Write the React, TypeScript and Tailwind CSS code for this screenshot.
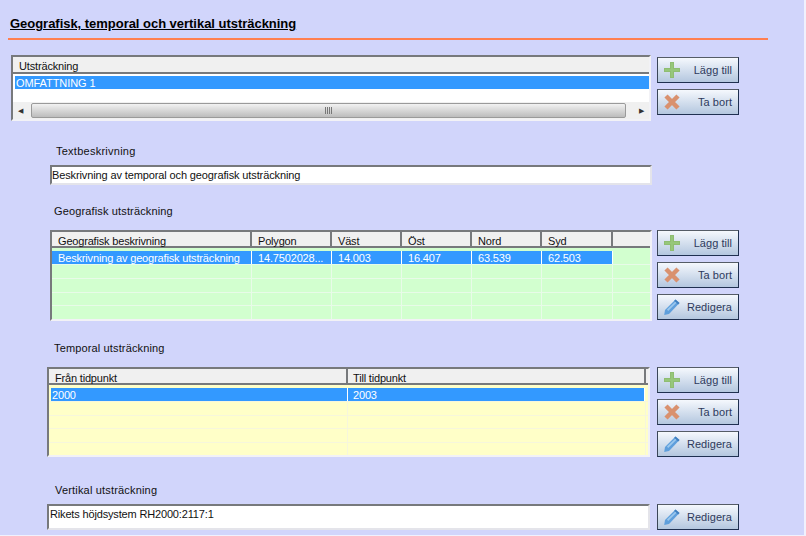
import React from 'react';

type Col = {
  title: string;
  value: string;
  width: string;
  cellWidth: string;
  cellPad: string;
  headPad: string;
};

const GEO_COLS: Col[] = [
  { title: 'Geografisk beskrivning', value: 'Beskrivning av geografisk utsträckning', width: 'w-[200px]', cellWidth: 'w-[200px]', cellPad: 'pl-[6px]', headPad: 'pl-[6px]' },
  { title: 'Polygon', value: '14.7502028...', width: 'w-[80px]', cellWidth: 'w-[80px]', cellPad: 'pl-[6px]', headPad: 'pl-[6px]' },
  { title: 'Väst', value: '14.003', width: 'w-[70px]', cellWidth: 'w-[70px]', cellPad: 'pl-[6px]', headPad: 'pl-[6px]' },
  { title: 'Öst', value: '16.407', width: 'w-[70px]', cellWidth: 'w-[70px]', cellPad: 'pl-[6px]', headPad: 'pl-[6px]' },
  { title: 'Nord', value: '63.539', width: 'w-[70px]', cellWidth: 'w-[70px]', cellPad: 'pl-[6px]', headPad: 'pl-[6px]' },
  { title: 'Syd', value: '62.503', width: 'w-[71px]', cellWidth: 'w-[71px]', cellPad: 'pl-[6px]', headPad: 'pl-[6px]' },
];

const TIME_COLS: Col[] = [
  { title: 'Från tidpunkt', value: '2000', width: 'w-[299px]', cellWidth: 'w-[297px]', cellPad: 'pl-[1px]', headPad: 'pl-[6px]' },
  { title: 'Till tidpunkt', value: '2003', width: 'w-[298px]', cellWidth: 'w-[297px]', cellPad: 'pl-[5px]', headPad: 'pl-[5px]' },
];

function PlusIcon() {
  return (
    <svg width="16" height="16" viewBox="0 0 16 16" className="shrink-0">
      <path d="M6 0h4v6h6v4h-6v6H6v-6H0V6h6z" fill="#8fbd72" />
      <path d="M7 1h2v6h6v2H9v6H7V9H1V7h6z" fill="#96c77a" />
    </svg>
  );
}

function CrossIcon() {
  return (
    <svg width="16" height="16" viewBox="0 0 16 16" className="shrink-0">
      <path d="M2 2l12 12M14 2L2 14" stroke="#d9916f" strokeWidth="4.5" />
    </svg>
  );
}

function PencilIcon() {
  return (
    <svg width="16" height="16" viewBox="0 0 16 16" className="shrink-0">
      <path d="M11.5 0.5l4 3.5L5 15l-4.8 1L1 11z" fill="#5f9fdc" />
      <path d="M3 10.5L12 2l1.2 1L4.2 12z" fill="#9cc8ee" />
      <path d="M11.5 0.5l4 3.5-1.3 1.4-4-3.6z" fill="#3f7fc0" />
    </svg>
  );
}

function ToolButton({ label, icon }: { label: string; icon: 'plus' | 'cross' | 'pencil' }) {
  return (
    <button className="flex h-[26px] w-[82px] items-center justify-between border border-[#1f3050] border-t-[#555c66] border-l-[#3a4658] bg-gradient-to-b from-[#f5f8fd] to-[#b4c7df] pl-[6px] pr-[6px] text-[11px] leading-none tracking-[0.05px] text-[#2e3a5c]">
      {icon === 'plus' && <PlusIcon />}
      {icon === 'cross' && <CrossIcon />}
      {icon === 'pencil' && <PencilIcon />}
      <span>{label}</span>
    </button>
  );
}

function GridTable({
  cols,
  rowBg,
  rowLine,
  selectedInset,
  className,
}: {
  cols: Col[];
  rowBg: string;
  rowLine: string;
  selectedInset: string;
  className: string;
}) {
  return (
    <div className={`${className} flex flex-col overflow-hidden border-2 border-t-[#77797c] border-l-[#77797c] border-r-[#f2f2f6] border-b-[#f2f2f6] ${rowBg}`}>
      <div className="flex">
        {cols.map((c) => (
          <div
            key={c.title}
            className={`${c.width} ${c.headPad} h-[16px] shrink-0 border-r-2 border-b-2 border-[#77797c] bg-[#f0f0f0] pt-[4px] text-[11px] leading-[11px] tracking-[-0.18px] text-[#111]`}
          >
            {c.title}
          </div>
        ))}
        <div className="h-[16px] flex-1 border-b-2 border-[#77797c] bg-[#f0f0f0]" />
      </div>
      <div className={`mt-[3px] flex h-[13px] ${selectedInset}`}>
        {cols.map((c) => (
          <div
            key={c.title}
            className={`${c.cellWidth} ${c.cellPad} shrink-0 truncate border-r border-white bg-[#3399ff] pt-[2px] text-[11px] leading-[11px] tracking-[-0.16px] text-white`}
          >
            {c.value}
          </div>
        ))}
      </div>
      {[0, 1, 2, 3].map((r) => (
        <div key={r} className={`flex h-[14px] border-t ${rowLine}`}>
          {cols.map((c) => (
            <div key={c.title} className={`${c.width} shrink-0 border-r ${rowLine}`} />
          ))}
        </div>
      ))}
    </div>
  );
}

export default function App() {
  return (
    <div className="relative h-[536px] w-[806px] overflow-hidden border-r-2 border-b border-[#f0f1fd] bg-[#d1d5fb] font-['Liberation_Sans',Arial,sans-serif] text-[11px] text-[#111]">
      <h1 className="ml-[10px] mt-[16px] text-[13px] font-bold leading-[16px] tracking-[-0.03px] text-black underline">
        Geografisk, temporal och vertikal utsträckning
      </h1>
      <div className="ml-[8px] mt-[6px] h-[2px] w-[760px] bg-[#ff7f50]" />

      {/* Utsträckning */}
      <div className="mt-[15px] flex">
        <div className="ml-[11px] flex h-[66px] w-[640px] flex-col border-2 border-t-[#77797c] border-l-[#77797c] border-r-[#f2f2f6] border-b-[#f2f2f6] bg-white">
          <div className="flex h-[17px] items-end border-b-2 border-[#77797c] bg-[#f0f0f0] pl-[6px] leading-none tracking-[-0.16px]">Utsträckning</div>
          <div className="ml-[2px] mt-[2px] h-[13px] bg-[#3399ff] pl-[1px] pt-[2px] leading-[11px] tracking-[-0.08px] text-white">OMFATTNING 1</div>
          <div className="mt-auto flex h-[17px] items-center bg-[#f0f0f0]">
            <div className="flex w-[18px] justify-center pr-[3px] text-[7px] leading-none text-[#333]">◀</div>
            <div className="flex h-[15px] flex-1 items-center justify-center gap-[1px] rounded-[2px] border border-[#9a9a9a] bg-gradient-to-b from-[#f2f2f2] to-[#bcbcbc]">
              <span className="h-[7px] w-[1px] bg-[#777]" />
              <span className="h-[7px] w-[1px] bg-[#777]" />
              <span className="h-[7px] w-[1px] bg-[#777]" />
              <span className="h-[7px] w-[1px] bg-[#777]" />
            </div>
            <div className="flex w-[23px] justify-end pr-[5px] text-[7px] leading-none text-[#333]">▶</div>
          </div>
        </div>
        <div className="ml-[6px] mt-[2px] flex flex-col gap-[6px]">
          <ToolButton label="Lägg till" icon="plus" />
          <ToolButton label="Ta bort" icon="cross" />
        </div>
      </div>

      {/* Textbeskrivning */}
      <div className="ml-[56px] mt-[23px] leading-[14px] tracking-[0.25px]">Textbeskrivning</div>
      <div className="ml-[50px] mt-[7px] flex h-[20px] w-[602px] items-center border-2 border-t-[#77797c] border-l-[#77797c] border-r-[#e4e4ea] border-b-[#e4e4ea] bg-white leading-none tracking-[-0.12px]">
        Beskrivning av temporal och geografisk utsträckning
      </div>

      {/* Geografisk utsträckning */}
      <div className="ml-[54px] mt-[19px] leading-[14px] tracking-[0.14px]">Geografisk utsträckning</div>
      <div className="mt-[12px] flex">
        <GridTable cols={GEO_COLS} rowBg="bg-[#d2ffcf]" rowLine="border-[#e8fbe8]" selectedInset="" className="ml-[50px] h-[91px] w-[602px]" />
        <div className="ml-[5px] flex flex-col gap-[6px]">
          <ToolButton label="Lägg till" icon="plus" />
          <ToolButton label="Ta bort" icon="cross" />
          <ToolButton label="Redigera" icon="pencil" />
        </div>
      </div>

      {/* Temporal utsträckning */}
      <div className="ml-[54px] mt-[20px] leading-[14px] tracking-[0.14px]">Temporal utsträckning</div>
      <div className="mt-[12px] flex">
        <GridTable cols={TIME_COLS} rowBg="bg-[#ffffc8]" rowLine="border-[#f6f6dc]" selectedInset="ml-[2px]" className="ml-[47px] h-[90px] w-[603px]" />
        <div className="ml-[7px] flex flex-col gap-[6px]">
          <ToolButton label="Lägg till" icon="plus" />
          <ToolButton label="Ta bort" icon="cross" />
          <ToolButton label="Redigera" icon="pencil" />
        </div>
      </div>

      {/* Vertikal utsträckning */}
      <div className="ml-[55px] mt-[26px] leading-[14px] tracking-[0.18px]">Vertikal utsträckning</div>
      <div className="mt-[7px] flex">
        <div className="ml-[47px] h-[26px] w-[603px] border-2 border-t-[#77797c] border-l-[#77797c] border-r-[#e4e4ea] border-b-[#e4e4ea] bg-white pl-[1px] pt-[1px] leading-[14px] tracking-[-0.16px]">
          Rikets höjdsystem RH2000:2117:1
        </div>
        <div className="ml-[7px]">
          <ToolButton label="Redigera" icon="pencil" />
        </div>
      </div>
    </div>
  );
}
